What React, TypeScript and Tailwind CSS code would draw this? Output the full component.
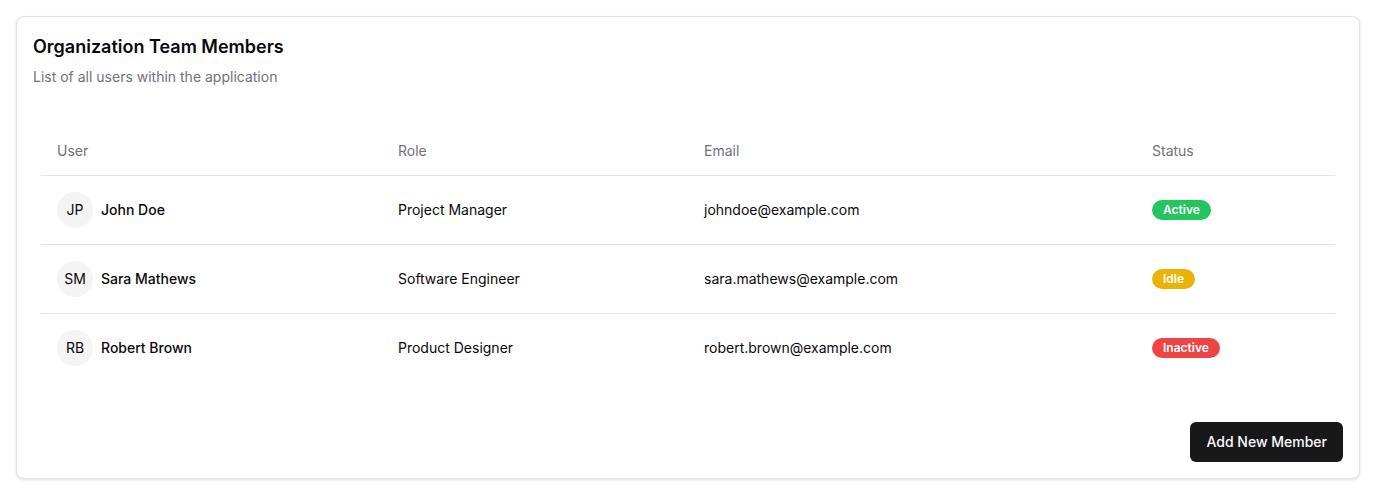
const members = [
  {
    initials: "JP",
    name: "John Doe",
    role: "Project Manager",
    email: "johndoe@example.com",
    status: "Active",
    badge: "bg-[#22c55e]",
  },
  {
    initials: "SM",
    name: "Sara Mathews",
    role: "Software Engineer",
    email: "sara.mathews@example.com",
    status: "Idle",
    badge: "bg-[#eab308]",
  },
  {
    initials: "RB",
    name: "Robert Brown",
    role: "Product Designer",
    email: "robert.brown@example.com",
    status: "Inactive",
    badge: "bg-[#ef4444]",
  },
];

const App = () => {
  return (
    <div className="bg-white p-4 font-['Inter',sans-serif] text-[#09090b]">
      <div className="rounded-lg border border-[#e4e4e7] bg-white p-4 shadow-sm">
        <h2 className="text-lg font-semibold leading-7">Organization Team Members</h2>
        <p className="mt-1.5 text-sm text-[#71717a]">List of all users within the application</p>

        <div className="mt-10 px-2">
          <table className="w-full table-fixed border-collapse text-sm">
            <thead>
              <tr className="border-b border-[#e4e4e7]">
                <th className="h-12 w-[341px] px-4 text-left font-normal text-[#71717a]">User</th>
                <th className="h-12 w-[306px] px-4 text-left font-normal text-[#71717a]">Role</th>
                <th className="h-12 w-[448px] px-4 text-left font-normal text-[#71717a]">Email</th>
                <th className="h-12 px-4 text-left font-normal text-[#71717a]">Status</th>
              </tr>
            </thead>
            <tbody>
              {members.map((m, i) => (
                <tr
                  key={m.email}
                  className={i < members.length - 1 ? "border-b border-[#e4e4e7]" : ""}
                >
                  <td className="px-4 py-4">
                    <div className="flex items-center gap-2">
                      <div className="flex h-9 w-9 items-center justify-center rounded-full bg-[#f4f4f5] text-sm">
                        {m.initials}
                      </div>
                      <span className="font-medium">{m.name}</span>
                    </div>
                  </td>
                  <td className="px-4 py-4">{m.role}</td>
                  <td className="px-4 py-4">{m.email}</td>
                  <td className="px-4 py-4">
                    <span
                      className={`inline-flex h-5 items-center rounded-full px-[11px] text-xs font-semibold text-white ${m.badge}`}
                    >
                      {m.status}
                    </span>
                  </td>
                </tr>
              ))}
            </tbody>
          </table>
        </div>

        <div className="mt-10 flex justify-end">
          <button className="h-10 rounded-md bg-[#18181b] px-4 text-sm font-medium text-[#fafafa]">
            Add New Member
          </button>
        </div>
      </div>
    </div>
  );
};

export default App;
